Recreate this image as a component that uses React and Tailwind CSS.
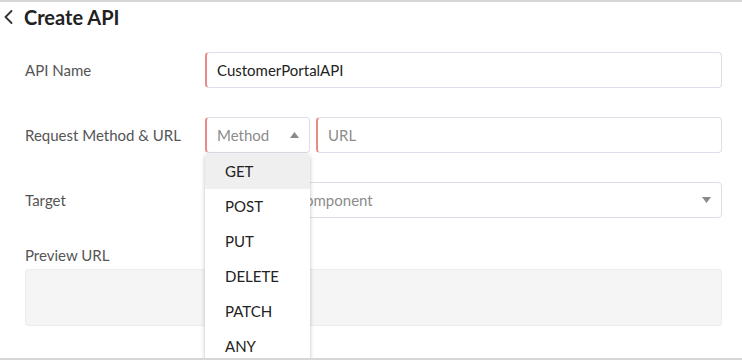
const methods = ["GET", "POST", "PUT", "DELETE", "PATCH", "ANY"];

const Caret = ({ up }) => (
  <svg width="9" height="6" viewBox="0 0 9 6" className="text-[#8a8a8a]">
    {up ? <path d="M0 6 L4.5 0 L9 6 Z" fill="currentColor" /> : <path d="M0 0 L4.5 6 L9 0 Z" fill="currentColor" />}
  </svg>
);

const App = () => {
  return (
    <div
      className="w-[742px] h-[360px] overflow-hidden bg-white border-t-2 border-b-2 border-[#d6d6d6] text-[15px] relative"
      style={{ fontFamily: "Lato, 'Open Sans', sans-serif" }}
    >
      {/* Header */}
      <div className="flex items-center h-[30px] pl-[4px] gap-[11px]">
        <svg width="9" height="14" viewBox="0 0 9 14" className="text-[#333]">
          <path d="M7.5 1 L1.5 7 L7.5 13" fill="none" stroke="currentColor" strokeWidth="1.8" strokeLinecap="round" strokeLinejoin="round" />
        </svg>
        <h1 className="text-[20px] font-bold text-[#222]">Create API</h1>
      </div>

      <div className="pl-[25px] pr-[20px] pt-[20px] flex flex-col">
        {/* API Name */}
        <div className="flex items-center">
          <label className="w-[180px] text-[#555]">API Name</label>
          <div className="flex-1 h-[36px] border border-[#dedee8] border-l-2 border-l-[#ea8a86] rounded-[4px] flex items-center px-[10px] text-[#222]">
            CustomerPortalAPI
          </div>
        </div>

        {/* Request Method & URL */}
        <div className="flex items-center mt-[29px]">
          <label className="w-[180px] text-[#555]">Request Method &amp; URL</label>
          <div className="flex-1 flex gap-[6px]">
            <div className="relative w-[105px]">
              <div className="h-[36px] border border-[#dedee8] border-l-2 border-l-[#ea8a86] rounded-[4px] flex items-center justify-between pl-[10px] pr-[10px] text-[#8c8c8c]">
                <span>Method</span>
                <Caret up />
              </div>
              <ul className="absolute left-0 top-[37px] w-[105px] bg-white rounded-[4px] shadow-[0_1px_4px_rgba(0,0,0,0.25)] z-10 overflow-hidden">
                {methods.map((m, i) => (
                  <li
                    key={m}
                    className={`h-[35px] flex items-center pl-[20px] text-[#222] ${i === 0 ? "bg-[#efefef]" : ""}`}
                  >
                    {m}
                  </li>
                ))}
              </ul>
            </div>
            <div className="flex-1 h-[36px] border border-[#dedee8] border-l-2 border-l-[#ea8a86] rounded-[4px] flex items-center px-[10px] text-[#8c8c8c]">
              URL
            </div>
          </div>
        </div>

        {/* Target */}
        <div className="flex items-center mt-[29px]">
          <label className="w-[180px] text-[#555]">Target</label>
          <div className="flex-1 h-[36px] border border-[#dedee8] rounded-[4px] flex items-center justify-between pl-[10px] pr-[10px] text-[#8c8c8c]">
            <span>Choose the Component</span>
            <Caret />
          </div>
        </div>

        {/* Preview URL */}
        <label className="mt-[26px] text-[#555]">Preview URL</label>
        <div className="mt-[2px] h-[57px] bg-[#f5f5f5] border border-[#ececf0] rounded-[3px]"></div>

        <label className="mt-[34px] text-[#555]">Response Type</label>
      </div>
    </div>
  );
};

export default App;
